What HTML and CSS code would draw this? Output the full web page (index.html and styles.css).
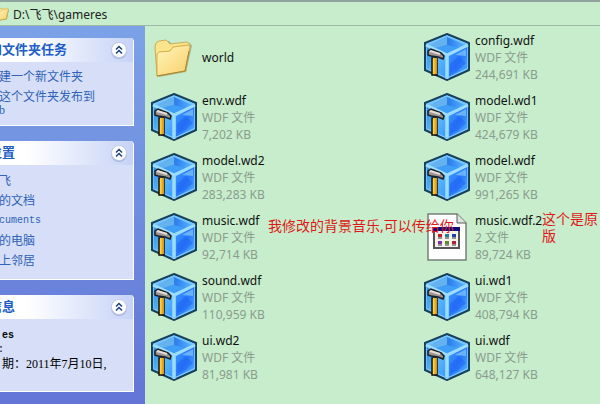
FILE: index.html
```html
<!DOCTYPE html>
<html lang="zh-CN">
<head>
    <meta charset="UTF-8">
    <meta name="viewport" content="width=device-width, initial-scale=1.0">
    <title>gameres</title>
    <link rel="stylesheet" href="styles.css">
</head>
<body>

    <!-- 图标 -->
    <svg class="defs" width="0" height="0" aria-hidden="true">
        <defs>
            <linearGradient id="gFolder" x1="0" y1="0" x2="1" y2="1">
                <stop offset="0" stop-color="#fff6bd"/>
                <stop offset="1" stop-color="#f8cf68"/>
            </linearGradient>
            <linearGradient id="gLeft" x1="0" y1="0" x2="1" y2="1">
                <stop offset="0" stop-color="#2f8ae0"/>
                <stop offset="0.5" stop-color="#5cb8f8"/>
                <stop offset="1" stop-color="#3c9cff"/>
            </linearGradient>
            <linearGradient id="gRight" x1="0" y1="0" x2="1" y2="1">
                <stop offset="0" stop-color="#3d9cff"/>
                <stop offset="0.5" stop-color="#2a78fa"/>
                <stop offset="1" stop-color="#56b4ff"/>
            </linearGradient>
            <linearGradient id="gTop" x1="0" y1="0" x2="1" y2="0">
                <stop offset="0" stop-color="#7cc4f2"/>
                <stop offset="0.45" stop-color="#2a86dc"/>
                <stop offset="0.55" stop-color="#2f7fee"/>
                <stop offset="1" stop-color="#58b4ff"/>
            </linearGradient>
            <linearGradient id="gHandle" x1="0" y1="0" x2="1" y2="0">
                <stop offset="0" stop-color="#ffdc4a"/>
                <stop offset="1" stop-color="#d98a08"/>
            </linearGradient>
            <symbol id="cube" viewBox="0 0 48 48">
                <path d="M24 1L46 10V37L24 47L2 37V10Z" fill="#6ec0ff" stroke="#17405c" stroke-width="2"/>
                <path d="M7 12L24 4L42 12L24 20Z" fill="url(#gTop)"/>
                <path d="M24 4V12L12 15L7 12Z" fill="#64b2ee"/>
                <path d="M24 12L36 15L24 20L13 15Z" fill="#3f9ff6"/>
                <path d="M4 14L22 23V44L4 36Z" fill="url(#gLeft)"/>
                <path d="M26 23L44 14V35L26 44Z" fill="url(#gRight)"/>
                <path d="M27 31L36 23L43 30L34 38L27 40Z" fill="#1c62f2" opacity=".5"/>
                <path d="M32 22L43 16V23Z" fill="#8fd6ff" opacity=".6"/>
                <path d="M3 12L24 22L45 12M24 22V46" fill="none" stroke="#9cdcff" stroke-width="3"/>
                <path d="M4 11L24 3L44 11M4 36L24 45L44 36" fill="none" stroke="#7cc8ff" stroke-width="1"/>
                <path d="M9 25H14V42H9Z" fill="url(#gHandle)" stroke="#15120c" stroke-width="1.5"/>
                <path d="M10 25H14V41H10Z" fill="url(#gHandle)"/>
                <path d="M5 18L8 16L18 20L21 23L20 26L15 24L8 23L5 22Z" fill="#9a9692" stroke="#1a2026" stroke-width="1.5"/>
                <path d="M7 18L17 21" stroke="#e4dcd8" stroke-width="2"/>
            </symbol>
            <symbol id="folder" viewBox="0 0 48 48">
                <path d="M9 42L6 12L9 9L19 8L23 12L40 10L42 13L36 39L9 44Z" fill="#7a8458" opacity=".5"/>
                <path d="M5 14L6 10L9 8L16 7L20 11L37 9L40 11L36 38L7 43Z" fill="#fae48c" stroke="#c8ae58"/>
                <path d="M7 22Q7 20 9 19L20 18L23 14L38 12Q40 12 40 14L35 38L7 43Z" fill="url(#gFolder)" stroke="#d2ac4c"/>
                <path d="M7 43L35 38L39 18" fill="none" stroke="#a88432"/>
            </symbol>
            <symbol id="file" viewBox="0 0 48 48">
                <path d="M5 1H34L43 10V47H5Z" fill="#fff" stroke="#777f77" stroke-width="1.5"/>
                <path d="M34 1V10H43" fill="#dde3dd" stroke="#555d55"/>
                <path d="M11 15H36V35H11Z" fill="#f4f2ea" stroke="#555" stroke-width="2"/>
                <path d="M10 14H37V18H10Z" fill="#10107a"/>
                <path d="M15 21h4v3h-4z" fill="#c02020"/><path d="M22 21h4v3h-4z" fill="#208098"/><path d="M29 21h4v3h-4z" fill="#2040b0"/>
                <path d="M15 28h4v3h-4z" fill="#8030a0"/><path d="M22 28h4v3h-4z" fill="#5a9020"/><path d="M29 28h4v3h-4z" fill="#b02040"/>
                <path d="M15 25h4M22 25h4M29 25h4M15 32h4M22 32h4M29 32h4" stroke="#333"/>
            </symbol>
            <symbol id="chevron" viewBox="0 0 18 18">
                <circle cx="9" cy="10" r="8" fill="#8e9cc8" opacity=".6"/>
                <circle cx="9" cy="9" r="7.5" fill="#fff" stroke="#c3cbe6"/>
                <path d="M6 8.5L9 5.5L12 8.5M6 12.5L9 9.5L12 12.5" fill="none" stroke="#1d3f7c" stroke-width="1.5"/>
            </symbol>
        </defs>
    </svg>

    <header class="address">
        <svg class="address-icon" viewBox="4 6 38 38" aria-hidden="true"><use href="#folder" width="48" height="48"/></svg>
        <span>D:\飞飞\gameres</span>
    </header>

    <div class="window">
        <aside class="sidebar">
            <section class="panel">
                <div class="panel-head">
                    <h2>和文件夹任务</h2>
                    <button type="button" class="toggle" aria-label="折叠"><svg viewBox="0 0 18 18"><use href="#chevron"/></svg></button>
                </div>
                <ul class="links tasks">
                    <li><a href="#">建一个新文件夹</a></li>
                    <li><a href="#">这个文件夹发布到<br>b</a></li>
                </ul>
            </section>

            <section class="panel">
                <div class="panel-head">
                    <h2>位置</h2>
                    <button type="button" class="toggle" aria-label="折叠"><svg viewBox="0 0 18 18"><use href="#chevron"/></svg></button>
                </div>
                <ul class="links places">
                    <li><a href="#">飞</a></li>
                    <li><a href="#">的文档</a></li>
                    <li class="mono"><a href="#">cuments</a></li>
                    <li><a href="#">的电脑</a></li>
                    <li><a href="#">上邻居</a></li>
                </ul>
            </section>

            <section class="panel">
                <div class="panel-head">
                    <h2>信息</h2>
                    <button type="button" class="toggle" aria-label="折叠"><svg viewBox="0 0 18 18"><use href="#chevron"/></svg></button>
                </div>
                <div class="details">
                    <p class="mono"><b>es</b></p>
                    <p class="mono size">:</p>
                    <p>期：2011年7月10日,</p>
                </div>
            </section>
        </aside>

        <main class="files">
            <div class="file">
                <svg class="icon" aria-hidden="true"><use href="#folder"/></svg>
                <div class="info"><p class="name">world</p></div>
            </div>
            <div class="file">
                <svg class="icon" aria-hidden="true"><use href="#cube"/></svg>
                <div class="info"><p class="name">config.wdf</p><p>WDF 文件</p><p>244,691 KB</p></div>
            </div>
            <div class="file">
                <svg class="icon" aria-hidden="true"><use href="#cube"/></svg>
                <div class="info"><p class="name">env.wdf</p><p>WDF 文件</p><p>7,202 KB</p></div>
            </div>
            <div class="file">
                <svg class="icon" aria-hidden="true"><use href="#cube"/></svg>
                <div class="info"><p class="name">model.wd1</p><p>WDF 文件</p><p>424,679 KB</p></div>
            </div>
            <div class="file">
                <svg class="icon" aria-hidden="true"><use href="#cube"/></svg>
                <div class="info"><p class="name">model.wd2</p><p>WDF 文件</p><p>283,283 KB</p></div>
            </div>
            <div class="file">
                <svg class="icon" aria-hidden="true"><use href="#cube"/></svg>
                <div class="info"><p class="name">model.wdf</p><p>WDF 文件</p><p>991,265 KB</p></div>
            </div>
            <div class="file">
                <svg class="icon" aria-hidden="true"><use href="#cube"/></svg>
                <div class="info"><p class="name">music.wdf</p><p>WDF 文件</p><p>92,714 KB</p></div>
                <p class="note note-mine">我修改的背景音乐,可以传给你</p>
            </div>
            <div class="file">
                <svg class="icon" aria-hidden="true"><use href="#file"/></svg>
                <div class="info"><p class="name">music.wdf.2</p><p>2 文件</p><p>89,724 KB</p></div>
                <p class="note note-orig">这个是原版</p>
            </div>
            <div class="file">
                <svg class="icon" aria-hidden="true"><use href="#cube"/></svg>
                <div class="info"><p class="name">sound.wdf</p><p>WDF 文件</p><p>110,959 KB</p></div>
            </div>
            <div class="file">
                <svg class="icon" aria-hidden="true"><use href="#cube"/></svg>
                <div class="info"><p class="name">ui.wd1</p><p>WDF 文件</p><p>408,794 KB</p></div>
            </div>
            <div class="file">
                <svg class="icon" aria-hidden="true"><use href="#cube"/></svg>
                <div class="info"><p class="name">ui.wd2</p><p>WDF 文件</p><p>81,981 KB</p></div>
            </div>
            <div class="file">
                <svg class="icon" aria-hidden="true"><use href="#cube"/></svg>
                <div class="info"><p class="name">ui.wdf</p><p>WDF 文件</p><p>648,127 KB</p></div>
            </div>
        </main>
    </div>

</body>
</html>
```
FILE: styles.css
```css
* {
    box-sizing: border-box;
}
body {
    margin: 0;
    min-height: 100vh;
    display: flex;
    flex-direction: column;
    background: #c7edcc;
    font-family: "Noto Sans", "Noto Sans CJK SC", sans-serif;
    font-size: 12px;
}
h2, p, ul {
    margin: 0;
    padding: 0;
}
.defs {
    position: absolute;
}

/* 地址栏 */
.address {
    display: flex;
    align-items: center;
    gap: 4px;
    height: 26px;
    border-top: 2px solid #8fa39c;
    border-bottom: 1px solid #9fb8a8;
    color: #222;
}
.address-icon {
    width: 14px;
    height: 14px;
    margin-left: -5px;
}

.window {
    flex: 1;
    display: flex;
}

/* 左侧任务栏 */
.sidebar {
    flex: none;
    width: 145px;
    padding: 12px 11px 10px 0;
    display: flex;
    flex-direction: column;
    gap: 15px;
    background: linear-gradient(#7ba2e7, #6375d6);
    font-family: "Liberation Serif", "Noto Sans CJK SC", serif;
}
.panel {
    border: 1px solid #fff;
    border-left: 0;
    border-top: 0;
    border-top-right-radius: 4px;
    background: #d6dff7;
    overflow: hidden;
}
.panel-head {
    display: flex;
    justify-content: space-between;
    align-items: center;
    height: 24px;
    padding-right: 5px;
    background: linear-gradient(to right, #fff, #fff 20%, #c6d3f7);
}
.panel-head h2 {
    margin-left: -11px;
    color: #215dc6;
    font-size: 13px;
    line-height: 16px;
}
.toggle {
    width: 18px;
    height: 18px;
    padding: 0;
    border: 0;
    background: none;
}
.toggle svg {
    display: block;
}
.links {
    list-style: none;
    margin-left: -1px;
}
.links a {
    color: #2f62b8;
    text-decoration: none;
}
.tasks {
    padding: 9px 0 8px;
    line-height: 13px;
}
.tasks li + li {
    margin-top: 7px;
}
.places {
    padding: 6px 0 8px;
    line-height: 20px;
}
.mono {
    font-family: "Liberation Mono", monospace;
    font-size: 10px;
}
.details {
    padding: 10px 0 20px 2px;
    line-height: 14px;
}
.size {
    margin-left: -4px;
}

/* 文件列表 */
.files {
    flex: 1;
    display: grid;
    grid-template-columns: 273px 1fr;
    grid-auto-rows: 60px;
    padding: 1px 0 0 5px;
}
.file {
    position: relative;
    display: flex;
    align-items: center;
    gap: 4px;
}
.icon {
    width: 48px;
    height: 48px;
}
.info {
    color: #8b9c8e;
    line-height: 17px;
}
.name {
    color: #111;
}

/* 红色批注 */
.note {
    position: absolute;
    color: #e01818;
    font-size: 14px;
    line-height: 17px;
}
.note-mine {
    top: 10px;
    left: 118px;
    z-index: 1;
    white-space: nowrap;
}
.note-orig {
    top: 3px;
    left: 119px;
    width: 58px;
}
```
